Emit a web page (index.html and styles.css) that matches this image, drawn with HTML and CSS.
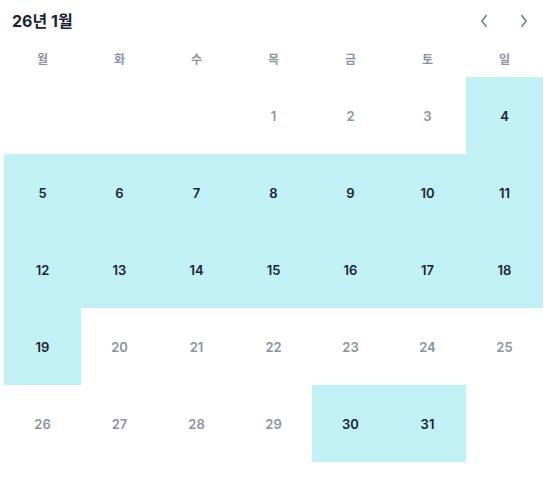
FILE: index.html
```html
<!DOCTYPE html>
<html lang="ko">
<head>
<meta charset="utf-8">
<link rel="stylesheet" href="styles.css">
</head>
<body>
<div class="cal">
  <div class="head">
    <div class="title">26년 1월</div>
    <div class="nav">
      <button class="btn" aria-label="이전"><svg width="16" height="16" viewBox="0 0 16 16"><path d="M10.3 2.5 5.8 8 10.3 13.5" fill="none" stroke="#6b7585" stroke-width="1.4" stroke-linecap="round" stroke-linejoin="round"/></svg></button>
      <button class="btn" aria-label="다음"><svg width="16" height="16" viewBox="0 0 16 16"><path d="M5.7 2.5 10.2 8 5.7 13.5" fill="none" stroke="#6b7585" stroke-width="1.4" stroke-linecap="round" stroke-linejoin="round"/></svg></button>
    </div>
  </div>
  <div class="grid">
    <div class="wd">월</div><div class="wd">화</div><div class="wd">수</div><div class="wd">목</div><div class="wd">금</div><div class="wd">토</div><div class="wd">일</div>
    <div class="d"></div><div class="d"></div><div class="d"></div>
    <div class="d">1</div><div class="d">2</div><div class="d">3</div><div class="d sel">4</div>
    <div class="d sel">5</div><div class="d sel">6</div><div class="d sel">7</div><div class="d sel">8</div><div class="d sel">9</div><div class="d sel">10</div><div class="d sel">11</div>
    <div class="d sel">12</div><div class="d sel">13</div><div class="d sel">14</div><div class="d sel">15</div><div class="d sel">16</div><div class="d sel">17</div><div class="d sel">18</div>
    <div class="d sel">19</div><div class="d">20</div><div class="d">21</div><div class="d">22</div><div class="d">23</div><div class="d">24</div><div class="d">25</div>
    <div class="d">26</div><div class="d">27</div><div class="d">28</div><div class="d">29</div><div class="d sel">30</div><div class="d sel">31</div><div class="d"></div>
  </div>
</div>
</body>
</html>
```
FILE: styles.css
```css
html, body {
  margin: 0;
  padding: 0;
  background: #ffffff;
}
body {
  font-family: Inter, "Noto Sans CJK KR", sans-serif;
  color: #1a2433;
}
.cal {
  width: 539px;
  padding: 0 4px;
}
.head {
  height: 40px;
  display: flex;
  align-items: center;
  justify-content: space-between;
}
.title {
  padding-left: 8px;
  font-size: 16px;
  font-weight: 700;
  color: #1a2433;
}
.nav {
  display: flex;
  gap: 24px;
  padding-right: 11px;
  padding-top: 1px;
}
.btn {
  width: 16px;
  height: 16px;
  padding: 0;
  border: 0;
  background: none;
  display: flex;
}
.grid {
  display: grid;
  grid-template-columns: repeat(7, 77px);
  grid-template-rows: 37px;
  grid-auto-rows: 77px;
}
.wd {
  display: flex;
  align-items: center;
  justify-content: center;
  font-size: 12px;
  font-weight: 600;
  color: #8a93a3;
}
.d {
  display: flex;
  align-items: center;
  justify-content: center;
  font-size: 13px;
  font-weight: 600;
  color: #8a93a3;
}
.d.sel {
  background: #c1f0f5;
  color: #1a2433;
}
```
